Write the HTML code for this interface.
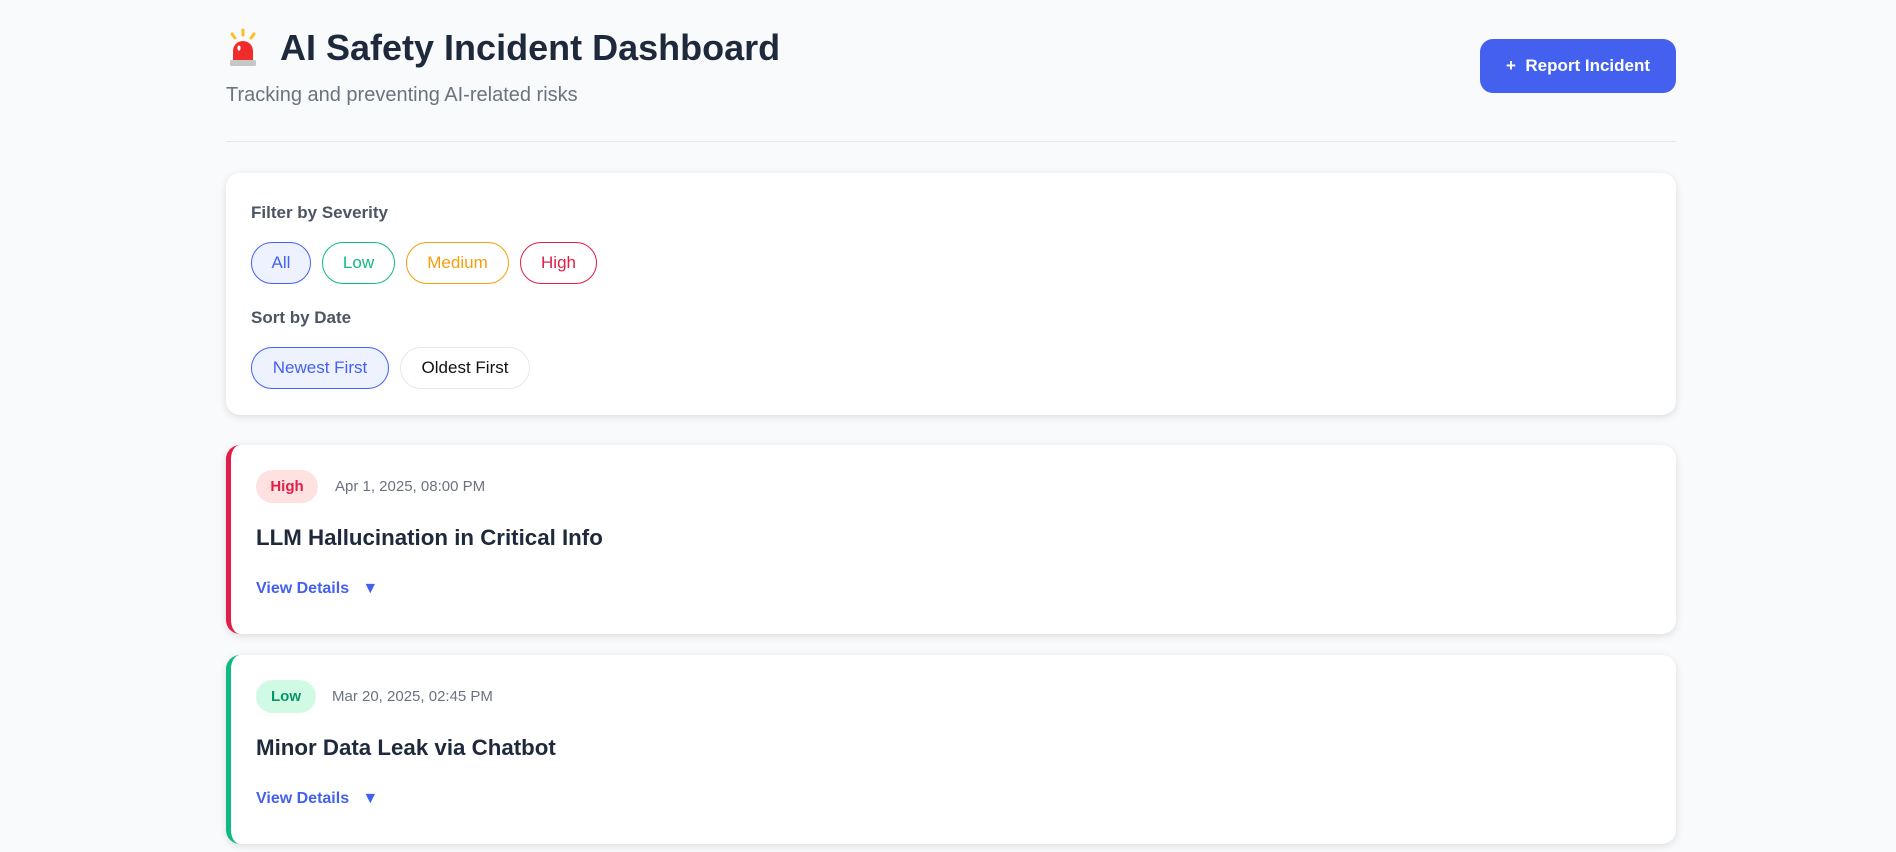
<!DOCTYPE html>
<html><head><meta charset="utf-8"><style>
*{box-sizing:border-box;margin:0;padding:0}
body{width:1896px;height:852px;overflow:hidden;background:#f8fafc;font-family:"Liberation Sans",Arial,sans-serif;color:#1f2937}
.wrap{position:absolute;left:226px;width:1450px;top:0}
h1{position:absolute;top:27px;left:0;font-size:36px;font-weight:700;color:#1e293b;display:flex;align-items:center;white-space:nowrap}
.sub{position:absolute;top:84px;left:0;font-size:20px;color:#6b7280}
.btn{position:absolute;right:0;top:39px;width:196px;height:54px;background:#4361ee;color:#fff;border-radius:13px;font-size:17px;font-weight:700;display:flex;align-items:center;justify-content:center}
.hr{position:absolute;top:141px;left:0;width:1450px;height:1px;background:#e5e7eb}
.card{position:absolute;left:0;width:1450px;background:#fff;border-radius:14px;box-shadow:0 2px 8px rgba(0,0,0,.12)}
.lbl{position:absolute;left:25px;font-size:17px;font-weight:700;color:#4b5563}
.pill{position:absolute;height:42px;border-radius:21px;border:1px solid;font-size:17px;display:flex;align-items:center;justify-content:center;background:#fff}
.inc{border-left:5px solid}
.badge{position:absolute;left:25px;top:25px;height:33px;border-radius:17px;font-size:15px;font-weight:700;display:flex;align-items:center;justify-content:center}
.date{position:absolute;top:33px;font-size:15px;color:#6b7280}
.t{position:absolute;left:25px;top:80px;font-size:22.3px;font-weight:700;color:#1e293b}
.vd{position:absolute;left:25px;top:135px;font-size:16px;font-weight:700;color:#4361ee}
</style></head><body><div class="wrap">
<h1><svg width="34" height="40" viewBox="0 0 34 40" style="margin-right:20px"><g stroke="#fbbf24" stroke-width="3" stroke-linecap="round"><line x1="17" y1="2" x2="17" y2="7"/><line x1="6" y1="6" x2="9" y2="10"/><line x1="28" y1="6" x2="25" y2="10"/></g><path d="M7 33 V23 a10 10 0 0 1 20 0 V33z" fill="#ef2b2b"/><ellipse cx="13" cy="20" rx="1.6" ry="2.6" fill="#fff"/><rect x="4" y="32" width="26" height="6" rx="1.5" fill="#c7c7c7"/></svg>AI Safety Incident Dashboard</h1>
<div class="sub">Tracking and preventing AI-related risks</div>
<div class="btn">+&nbsp;&nbsp;Report Incident</div>
<div class="hr"></div>
<div class="card" style="top:173px;height:242px">
<div class="lbl" style="top:30px">Filter by Severity</div>
<div class="pill" style="top:69px;left:25px;width:60px;color:#4361ee;border-color:#4361ee;background:#eef2ff">All</div>
<div class="pill" style="top:69px;left:96px;width:73px;color:#10b981;border-color:#10b981">Low</div>
<div class="pill" style="top:69px;left:180px;width:103px;color:#f59e0b;border-color:#f59e0b">Medium</div>
<div class="pill" style="top:69px;left:294px;width:77px;color:#e11d48;border-color:#e11d48">High</div>
<div class="lbl" style="top:135px">Sort by Date</div>
<div class="pill" style="top:174px;left:25px;width:138px;color:#4361ee;border-color:#4361ee;background:#eef2ff">Newest First</div>
<div class="pill" style="top:174px;left:174px;width:130px;color:#111;border-color:#e5e7eb">Oldest First</div>
</div>
<div class="card inc" style="top:445px;height:189px;border-color:#e11d48">
<div class="badge" style="width:62px;background:#fee2e2;color:#e11d48">High</div>
<div class="date" style="left:104px">Apr 1, 2025, 08:00 PM</div>
<div class="t">LLM Hallucination in Critical Info</div>
<div class="vd">View Details&nbsp;&nbsp;&nbsp;▼</div>
</div>
<div class="card inc" style="top:655px;height:189px;border-color:#10b981">
<div class="badge" style="width:60px;background:#d1fae5;color:#059669">Low</div>
<div class="date" style="left:101px">Mar 20, 2025, 02:45 PM</div>
<div class="t">Minor Data Leak via Chatbot</div>
<div class="vd">View Details&nbsp;&nbsp;&nbsp;▼</div>
</div>
</div></body></html>
